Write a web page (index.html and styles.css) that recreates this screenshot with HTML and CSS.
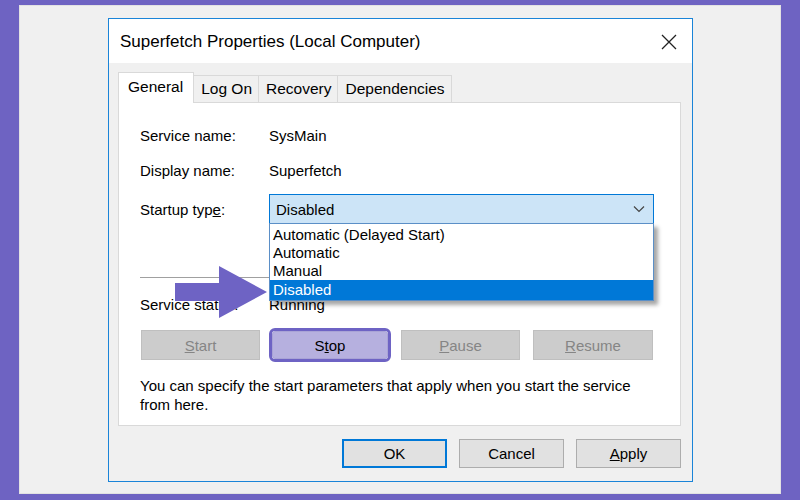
FILE: index.html
```html
<!DOCTYPE html>
<html lang="en">
<head>
    <meta charset="UTF-8">
    <title>Superfetch Properties</title>
    <link rel="stylesheet" href="styles.css">
</head>
<body>

    <!-- Grey desktop area inside the purple frame -->
    <div class="frame">

        <div class="dialog">
            <!-- Title bar -->
            <div class="titlebar">
                <span class="title">Superfetch Properties (Local Computer)</span>
                <svg class="close" width="16" height="16" viewBox="0 0 16 16">
                    <path d="M1 1 L15 15 M15 1 L1 15" stroke="#222" stroke-width="1.3" fill="none"/>
                </svg>
            </div>

            <div class="dialog-body">
                <!-- Tabs -->
                <div class="tabs">
                    <div class="tab active">General</div>
                    <div class="tab">Log On</div>
                    <div class="tab">Recovery</div>
                    <div class="tab">Dependencies</div>
                </div>

                <!-- General tab page -->
                <div class="panel">
                    <div class="row">
                        <span class="label">Service name:</span>
                        <span>SysMain</span>
                    </div>
                    <div class="row">
                        <span class="label">Display name:</span>
                        <span>Superfetch</span>
                    </div>
                    <div class="row startup">
                        <span class="label">Startup typ<u>e</u>:</span>
                        <div class="combo">
                            <span>Disabled</span>
                            <svg class="chevron" width="12" height="8" viewBox="0 0 12 8">
                                <path d="M1 1.5 L6 6.5 L11 1.5" stroke="#444" stroke-width="1.2" fill="none"/>
                            </svg>
                            <ul class="droplist">
                                <li>Automatic (Delayed Start)</li>
                                <li>Automatic</li>
                                <li>Manual</li>
                                <li class="selected">Disabled</li>
                            </ul>
                        </div>
                    </div>

                    <div class="separator"></div>

                    <div class="row status">
                        <span class="label">Service status:</span>
                        <span>Running</span>
                    </div>

                    <div class="service-buttons">
                        <button class="btn disabled"><u>S</u>tart</button>
                        <div class="highlight">
                            <button class="btn stop">S<u>t</u>op</button>
                        </div>
                        <button class="btn disabled"><u>P</u>ause</button>
                        <button class="btn disabled resume"><u>R</u>esume</button>
                    </div>

                    <p class="hint">You can specify the start parameters that apply when you start the service from here.</p>
                </div>

                <!-- Dialog buttons -->
                <div class="footer">
                    <button class="btn default">OK</button>
                    <button class="btn">Cancel</button>
                    <button class="btn"><u>A</u>pply</button>
                </div>
            </div>
        </div>

        <!-- Purple pointer arrow -->
        <svg class="arrow" width="94" height="54" viewBox="0 0 94 54">
            <path d="M0 18 L44 18 L44 1 L92 27 L44 53 L44 36 L0 36 Z" fill="#6e63c4"/>
        </svg>
    </div>

</body>
</html>
```

FILE: styles.css
```css
body {
    margin: 0;
    background-color: #6e63c2;
    font-family: "Liberation Sans", Arial, sans-serif;
    font-size: 15px;
    color: #000;
}

/* Grey area inside the purple border */
.frame {
    position: relative;
    margin: 5px 19px 0;
    height: 489px;
    background-color: #f0f0f0;
    box-sizing: border-box;
    border: 1px solid #e2e2e2;
    padding: 12px 0 0 88px;
}

/* Dialog window */
.dialog {
    width: 583px;
    height: 462px;
    border: 1px solid #1a84d8;
    background-color: #f0f0f0;
}

.titlebar {
    height: 44px;
    background-color: #fff;
    display: flex;
    align-items: center;
    justify-content: space-between;
    padding: 0 15px 0 11px;
}

.title {
    font-size: 17px;
    padding-top: 2px;
}

.close {
    margin-top: 2px;
}

.dialog-body {
    padding: 10px 11px 0 8px;
}

/* Tabs */
.tabs {
    display: flex;
    align-items: flex-end;
    height: 29px;
    padding-left: 1px;
}

.tab {
    height: 26px;
    line-height: 26px;
    padding: 0 6px 0 7px;
    border: 1px solid #d9d9d9;
    border-bottom: none;
    border-left: none;
    background-color: #f0f0f0;
    font-size: 15.5px;
}

.tab.active {
    height: 30px;
    line-height: 28px;
    margin-bottom: -1px;
    padding: 0 10px 0 9px;
    border-left: 1px solid #d9d9d9;
    background-color: #fff;
    position: relative;
    z-index: 1;
}

/* Tab page */
.panel {
    border: 1px solid #d9d9d9;
    background-color: #fff;
    padding: 22px 0 0 21px;
    box-sizing: border-box;
    height: 324px;
    margin-left: 1px;
}

.row {
    display: flex;
    align-items: center;
    height: 20px;
    margin-bottom: 15px;
}

.label {
    width: 129px;
}

.row.startup {
    height: 30px;
    margin-top: -1px;
    margin-bottom: 0;
}

.combo {
    position: relative;
    border: 1px solid #0078d7;
    background-color: #cce4f7;
    display: flex;
    align-items: center;
    justify-content: space-between;
    padding: 0 8px 0 6px;
    box-sizing: border-box;
    width: 385px;
    height: 30px;
}

.droplist {
    position: absolute;
    top: 28px;
    left: -1px;
    width: 385px;
    margin: 0;
    padding: 2px 0 0;
    list-style: none;
    background-color: #fff;
    border: 1px solid #5b8fc7;
    box-sizing: border-box;
    box-shadow: 4px 4px 4px rgba(0, 0, 0, 0.35);
    z-index: 2;
}

.droplist li {
    height: 18px;
    line-height: 18px;
    padding-left: 3px;
}

.droplist li.selected {
    height: 20px;
    line-height: 20px;
    background-color: #0078d7;
    color: #fff;
}

.separator {
    width: 512px;
    height: 1px;
    background-color: #a0a0a0;
    margin: 53px 0 16px;
}

.row.status {
    margin-bottom: 14px;
}

/* Buttons */
.btn {
    font-family: "Liberation Sans", Arial, sans-serif;
    font-size: 15px;
    color: #000;
    background-color: #e1e1e1;
    border: 1px solid #adadad;
    width: 105px;
    height: 29px;
    padding: 0;
}

.service-buttons {
    display: flex;
    align-items: center;
    gap: 10px;
    margin-left: 1px;
}

.service-buttons .btn {
    width: 119px;
    height: 30px;
}

.service-buttons .btn.resume {
    width: 120px;
    margin-left: 3px;
}

.btn.disabled {
    background-color: #cccccc;
    border-color: #bfbfbf;
    color: #858585;
}

.highlight {
    border: 3px solid #6e63c4;
    border-radius: 6px;
    margin-left: -1px;
}

.service-buttons .btn.stop {
    width: 116px;
    height: 28px;
    background-color: #b6b0df;
    border: 1px solid #a9a3d6;
    border-radius: 3px;
    display: block;
}

.hint {
    margin: 14px 0 0;
    line-height: 19px;
    width: 510px;
}

.footer {
    display: flex;
    justify-content: flex-end;
    gap: 12px;
    margin-top: 13px;
}

.btn.default {
    border: 2px solid #0078d7;
}

/* Overlay arrow pointing at the selected item */
.arrow {
    position: absolute;
    left: 155px;
    top: 259px;
}
```
